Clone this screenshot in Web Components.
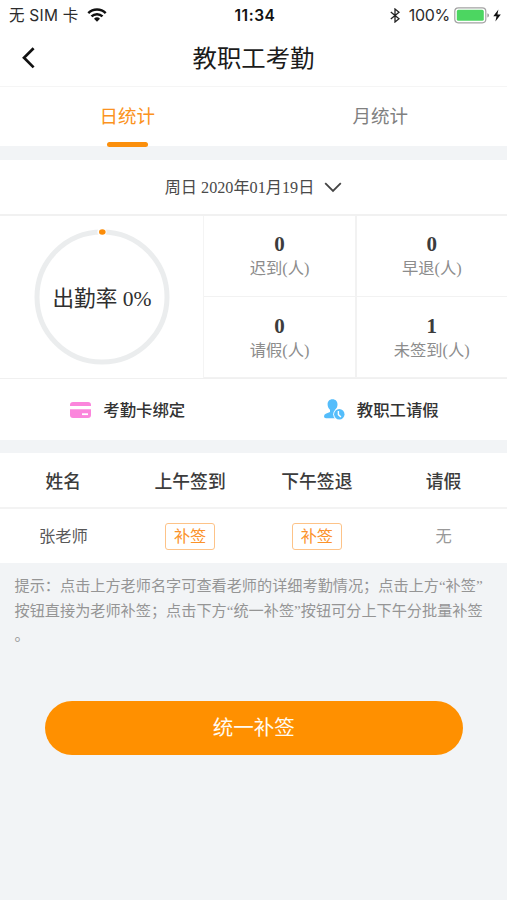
<!DOCTYPE html>
<html lang="zh-CN">
<head>
<meta charset="utf-8">
<title>教职工考勤</title>
<style>
body{margin:0;background:#f2f4f6;font-family:"Liberation Serif","Noto Sans CJK SC",serif;color:#333}
</style>
</head>
<body>
<attendance-page></attendance-page>
<script>
const define = (name, html) => {
  const t = document.createElement('template');
  t.innerHTML = html;
  customElements.define(name, class extends HTMLElement {
    constructor() {
      super();
      this.attachShadow({mode: 'open'}).appendChild(t.content.cloneNode(true));
    }
  });
};

define('status-bar', `
<style>
:host{display:grid;grid-template-columns:1fr auto 1fr;align-items:center;height:30px;padding:0 6px 0 9px;box-sizing:border-box;font:16px/30px Inter,"Noto Sans CJK SC",sans-serif;color:#2c2c2c}
.l,.r{display:flex;align-items:center}
.l{gap:8px}
.l span{font-size:15.5px;letter-spacing:.25px;padding-top:1px;line-height:29px}
.r{justify-content:flex-end}
.t{font-weight:600;font-size:15.5px;letter-spacing:.55px;color:#111;padding-top:1px;line-height:29px}
.p{margin:0 4px 0 9px;font-size:16px;letter-spacing:-.3px}
svg{display:block;flex:none}
.l svg{margin-top:-1px}
.bolt{margin-left:3px}
</style>
<div class="l"><span>无 SIM 卡</span>
<svg width="20" height="14" viewBox="0 0 20 14" fill="none" stroke="#111" stroke-width="2.5"><path d="M1.3 5.1a12.3 12.3 0 0 1 17.4 0M4.5 8.4a7.8 7.8 0 0 1 11 0"/><path d="M7 10.7a4.3 4.3 0 0 1 6 0l-3 3z" fill="#111" stroke="none"/></svg></div>
<div class="t">11:34</div>
<div class="r">
<svg width="10" height="15" viewBox="0 0 10 15" fill="none" stroke="#222" stroke-width="1.3"><path d="M.8 4L9 10.8 5 14V1l4 3.2L.8 11"/></svg>
<span class="p">100%</span>
<svg width="36" height="17" viewBox="0 0 36 17"><rect x=".8" y=".8" width="31" height="15" rx="3.5" fill="#fff" stroke="#a3a3a3" stroke-width="1.2"/><rect x="2.8" y="2.8" width="27" height="11" rx="1.6" fill="#4cd661"/><path d="M33.4 6.2q1.6.6 1.6 2.2t-1.6 2.2z" fill="#999"/></svg>
<svg class="bolt" width="8" height="13" viewBox="0 0 8 13"><path d="M5.4.5L.3 7.2h3.2L2.4 12.5 7.8 5.4H4.4z" fill="#111"/></svg>
</div>`);

define('nav-bar', `
<style>
:host{display:grid;grid-template-columns:60px 1fr 60px;align-items:center;height:57px;box-sizing:border-box;border-bottom:1.5px solid #f5f5f5;color:#1b1b1b;font-size:24.4px;line-height:54px;padding-top:1px;text-align:center}
svg{display:block;margin:-1px 0 0 21px}
</style>
<svg width="15" height="24" viewBox="0 0 15 24" fill="none" stroke="#111" stroke-width="2.7"><path d="M12.6 2.2L3 11.8l9.600 9.600"/></svg>
<slot></slot>`);

define('tab-item', `
<style>
:host{display:flex;flex:1;flex-direction:column;align-items:center;height:60px;color:#808080;font-size:18.5px;line-height:56px}
span{height:55px;padding-top:2px;box-sizing:border-box}
i{width:41px;height:4.5px;border-radius:3px;margin-left:2px}
:host([active]){color:#fb9220}
:host([active]) span{padding-left:1px}
:host([active]) i{background:#fb8f0c}
</style><span><slot></slot></span><i></i>`);

define('tab-bar', `<style>:host{display:flex;height:58.5px}</style><slot></slot>`);

define('date-picker', `
<style>
:host{display:flex;align-items:center;justify-content:center;gap:10px;height:56px;box-sizing:border-box;border-bottom:2px solid #f1f1f1;background:#fff;font-size:16.2px;color:#4a4a4a;white-space:nowrap}
span{padding-bottom:2px}
svg{display:block}
</style><span><slot></slot></span>
<svg width="18" height="11" viewBox="0 0 18 11" fill="none" stroke="#444" stroke-width="1.8"><path d="M1.2 1.2L9 9l7.8-7.8"/></svg>`);

define('rate-ring', `
<style>
:host{display:grid;place-items:center;width:203px;height:162px;border-right:1.5px solid #f4f4f4;box-sizing:content-box}
svg,span{grid-area:1/1}
span{font-size:21.6px;color:#2f2f2f;white-space:nowrap;padding:0 0 2px 1px}
</style>
<svg width="138" height="138" viewBox="0 0 138 138"><circle cx="69" cy="69" r="65" fill="none" stroke="#ebedee" stroke-width="5"/><circle cx="69" cy="4" r="4.6" fill="#fff"/><ellipse cx="69.3" cy="4" rx="3.3" ry="2.8" fill="#fb8c08"/></svg>
<span><slot></slot></span>`);

define('stat-cell', `
<style>
:host{display:flex;flex-direction:column;align-items:center;justify-content:center;background:#fff;padding-top:2px}
b{font-size:21px;line-height:25px;color:#3c3c3c}
span{font-size:16.3px;line-height:24px;color:#8c8c8c}
</style><b><slot name="value"></slot></b><span><slot></slot></span>`);

define('stat-board', `
<style>
:host{display:flex;height:162px;border-bottom:1.5px solid #f0f0f0;background:#fff}
.g{flex:1;display:grid;grid-template-columns:151px 1fr;grid-template-rows:1fr 1fr;gap:1.5px;background:#f2f2f2;padding-bottom:1px}
</style><slot name="ring"></slot><div class="g"><slot></slot></div>`);

define('action-link', `
<style>
:host{display:flex;flex:1;align-items:center;justify-content:center;gap:12px;font-size:16.4px;font-weight:500;color:#333;padding-left:2px}
span{padding-bottom:2px}
::slotted(svg){display:block}
</style><slot name="icon"></slot><span><slot></slot></span>`);

define('action-bar', `<style>:host{display:flex;height:61px;background:#fff}</style><slot></slot>`);

define('data-row', `
<style>
:host{display:grid;grid-template-columns:repeat(4,1fr);place-items:center;height:54px;box-sizing:border-box;background:#fff;font-size:16.3px;color:#585858}
:host([head]){height:56px;border-bottom:2px solid #f3f3f3;font-size:17.8px;font-weight:500;color:#3c3c3c}
::slotted(span){padding-bottom:2px}
:host([head]) ::slotted(span){padding-bottom:0}
::slotted(.none){color:#999}
</style><slot></slot>`);

define('sign-tag', `
<style>
:host{display:block;width:50px;height:27px;box-sizing:border-box;border:1.5px solid #fdc388;border-radius:3px;color:#fb922a;font-size:16.2px;line-height:27px;text-align:center}
</style><slot></slot>`);

define('hint-note', `
<style>
:host{display:block;padding:11px 0 0 14.5px;font-size:15.17px;line-height:24.5px;color:#959595;white-space:nowrap}
</style><slot></slot>`);

define('pill-button', `
<style>
:host{display:block;margin:53px 44px 0 44.5px}
button{display:block;width:100%;height:54px;border:0;border-radius:27px;padding:0;background:#ff9000;color:#fffaf0;font:20.5px/54px "Liberation Serif","Noto Sans CJK SC",serif}
</style><button><slot></slot></button>`);

define('attendance-page', `
<style>
:host{display:block;height:900px;overflow:hidden;background:#f2f4f6}
header{background:#fff}
date-picker{margin-top:14.5px}
data-row[head]{margin-top:13px}
</style>
<header>
<status-bar></status-bar>
<nav-bar>教职工考勤</nav-bar>
<tab-bar><tab-item active>日统计</tab-item><tab-item>月统计</tab-item></tab-bar>
</header>
<date-picker>周日 2020年01月19日</date-picker>
<stat-board>
<rate-ring slot="ring">出勤率 0%</rate-ring>
<stat-cell><span slot="value">0</span>迟到(人)</stat-cell>
<stat-cell><span slot="value">0</span>早退(人)</stat-cell>
<stat-cell><span slot="value">0</span>请假(人)</stat-cell>
<stat-cell><span slot="value">1</span>未签到(人)</stat-cell>
</stat-board>
<action-bar>
<action-link><svg slot="icon" width="21" height="16" viewBox="0 0 21 16"><path d="M0 4V3q0-3 3-3h15q3 0 3 3v1z" fill="#fb86dc"/><path d="M0 7.2h21V13q0 3-3 3H3q-3 0-3-3z" fill="#fb86dc"/><path d="M12 12.2h6" stroke="#fff" stroke-width="1.8"/></svg>考勤卡绑定</action-link>
<action-link><svg slot="icon" width="21" height="21" viewBox="0 0 21 21"><path d="M8.5.3c3.200 0 5 2.200 5 5.200 0 2.200-.9 3.900-2.200 5v1.800l3.700 1.500v5.400H2q-2 0-2-1.800 0-1.900 1.800-2.600l4.200-1.900v-2.200C4.600 9.500 3.600 7.800 3.600 5.500c0-3 1.700-5.200 4.900-5.200z" fill="#54bdfb"/><circle cx="15.200" cy="15.200" r="6" fill="#fff"/><circle cx="15.300" cy="15.300" r="5.200" fill="#54bdfb"/><path d="M14.400 12.100v3.500l2.500 2.500" fill="none" stroke="#fff" stroke-width="1.400"/></svg>教职工请假</action-link>
</action-bar>
<data-row head><span>姓名</span><span>上午签到</span><span>下午签退</span><span>请假</span></data-row>
<data-row><span>张老师</span><sign-tag>补签</sign-tag><sign-tag>补签</sign-tag><span class="none">无</span></data-row>
<hint-note>提示：点击上方老师名字可查看老师的详细考勤情况；点击上方“补签”<br>按钮直接为老师补签；点击下方“统一补签”按钮可分上下午分批量补签<br>。</hint-note>
<pill-button>统一补签</pill-button>`);
</script>
</body>
</html>
